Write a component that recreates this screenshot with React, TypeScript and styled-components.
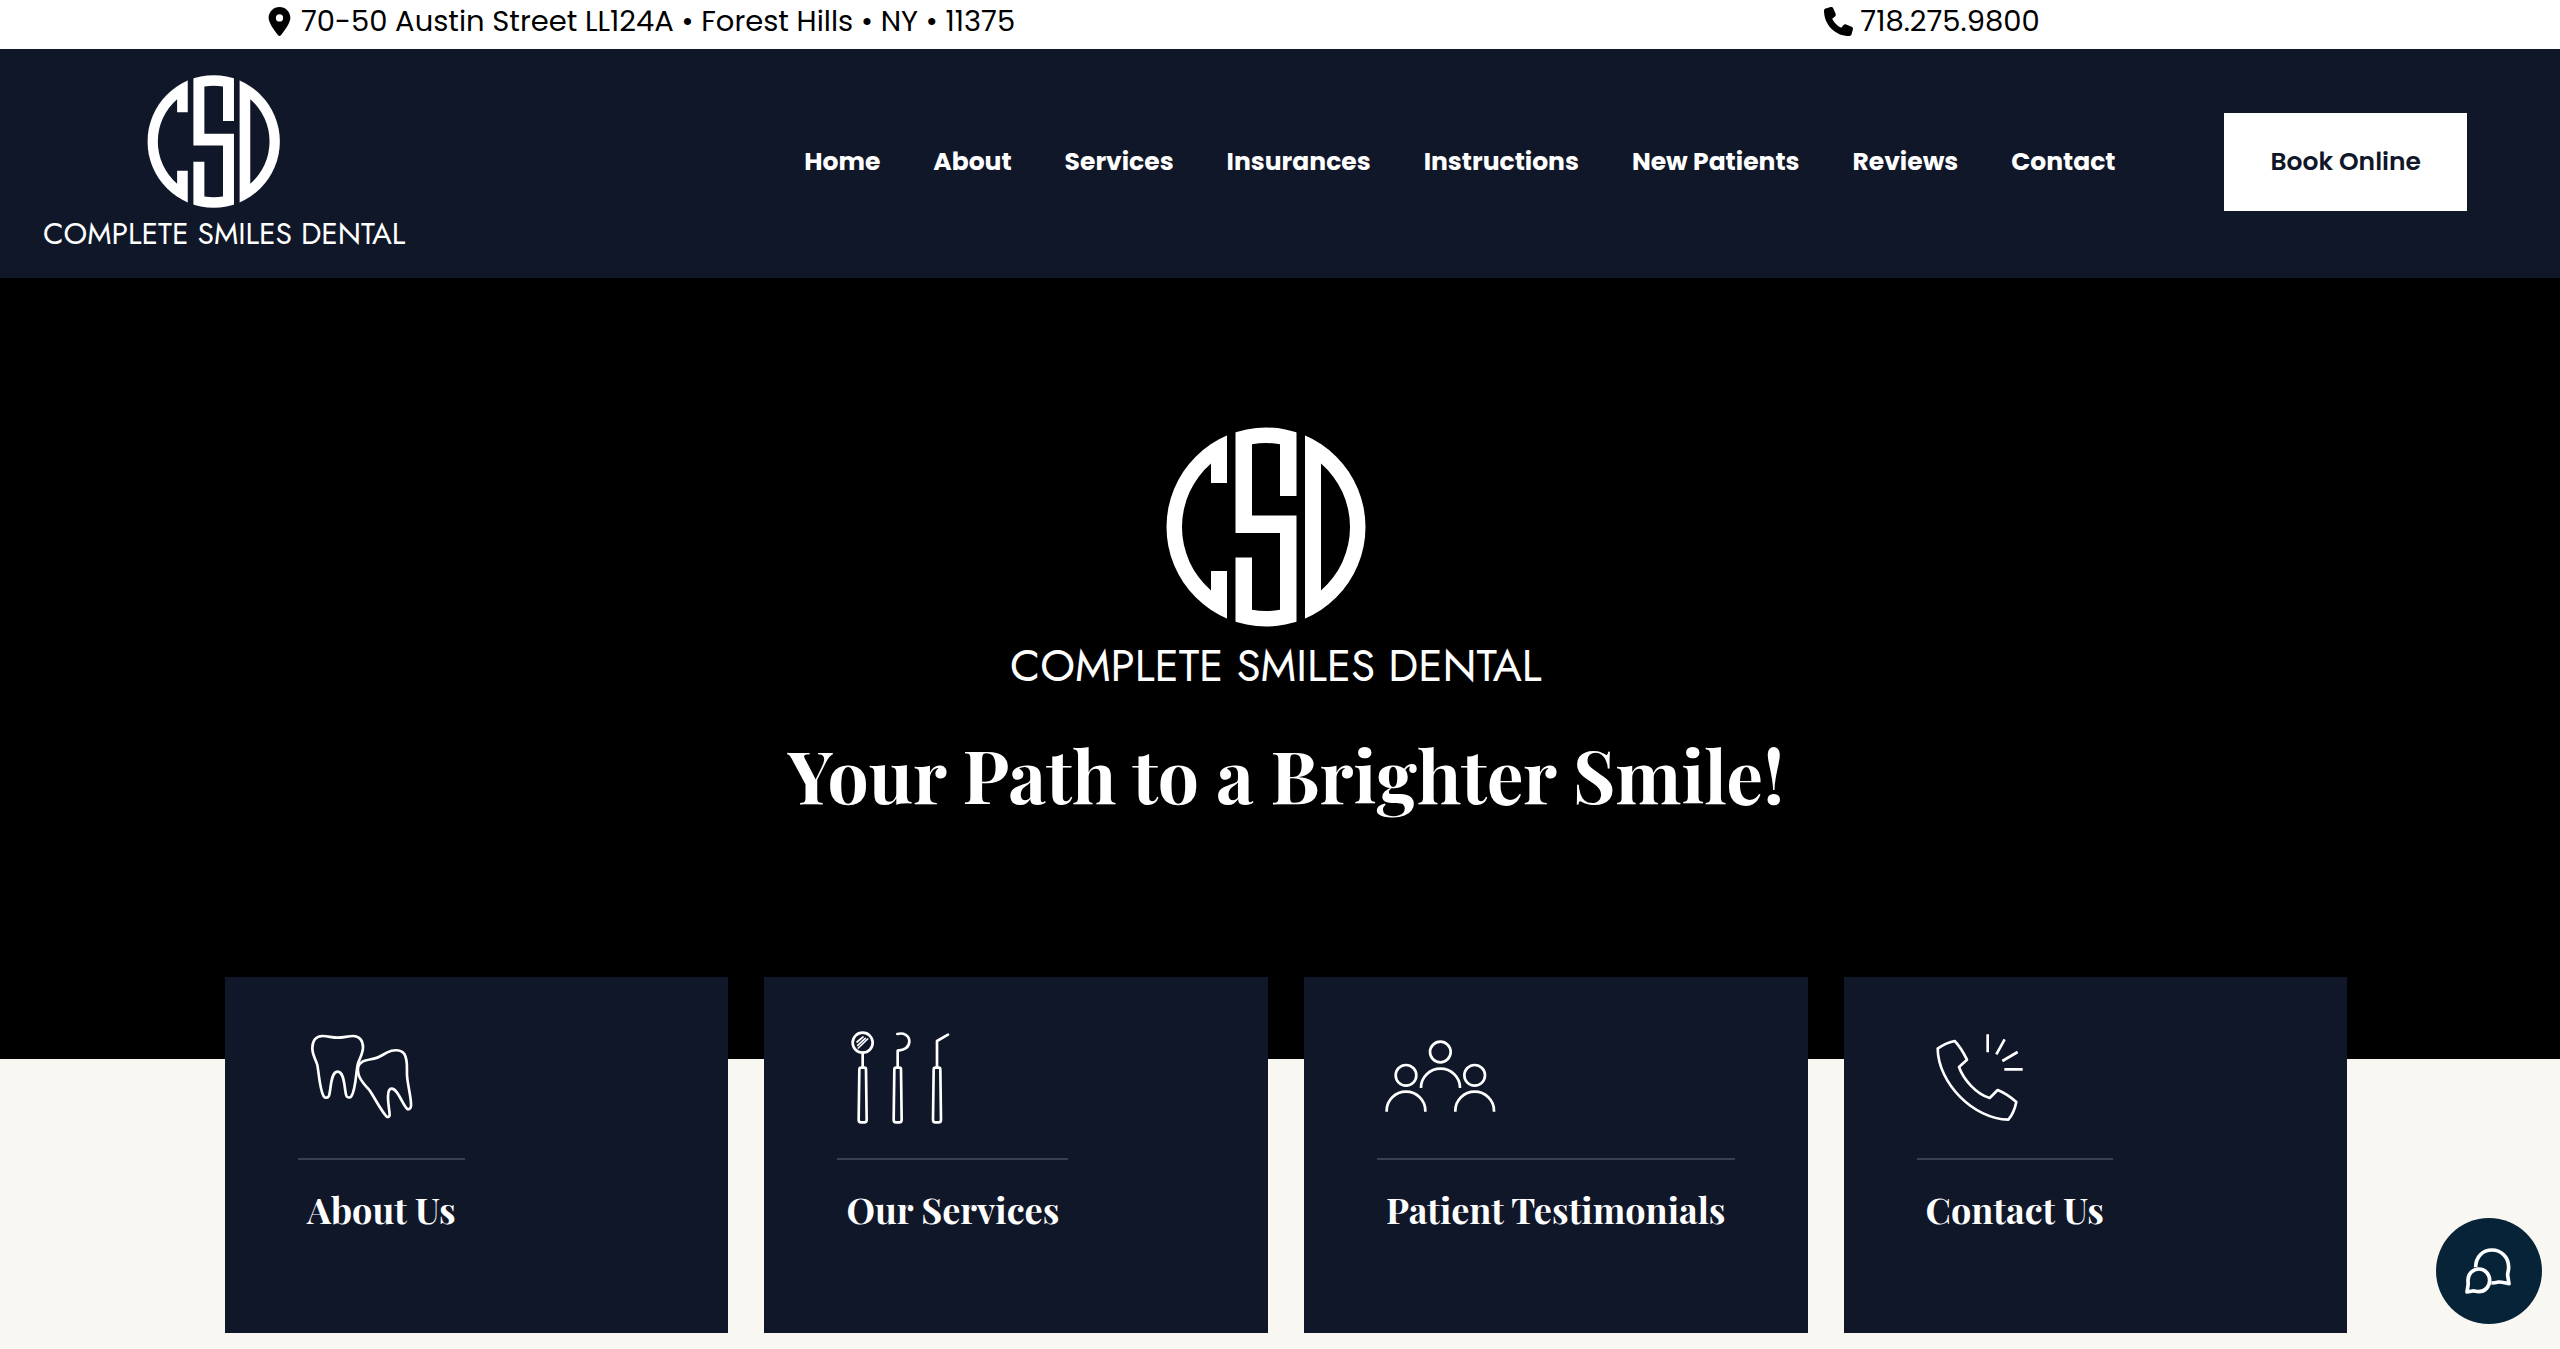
import React from 'react';
import styled, { createGlobalStyle } from 'styled-components';
import { FaLocationDot, FaPhone } from 'react-icons/fa6';

const navy = '#101728';
const cream = '#f9f7f1';
const sans = "Poppins, Inter, 'Open Sans', sans-serif";
const serif = "'Playfair Display', 'Liberation Serif', serif";

const GlobalStyle = createGlobalStyle`
  *, *::before, *::after { box-sizing: border-box; }
  body {
    margin: 0;
    background: ${cream};
    font-family: ${sans};
  }
  h1, h2, p { margin: 0; }
  a { color: inherit; text-decoration: none; }
`;

const TopBar = styled.div`
  display: grid;
  grid-template-columns: 1fr 1fr;
  height: 49px;
  padding-bottom: 7px;
  background: #fff;
  color: #000;
`;

const ContactCell = styled.div<{ $inset?: number }>`
  display: flex;
  align-items: center;
  justify-content: center;
  padding-left: ${(p) => p.$inset ?? 0}px;
`;

const ContactLink = styled.a`
  display: flex;
  align-items: center;
  gap: 7px;
  font-size: 29px;
  line-height: 41px;
  white-space: nowrap;

  svg {
    width: auto;
    height: 29px;
  }
`;

const Header = styled.header`
  display: flex;
  align-items: center;
  padding: 25px 93px 29px 43px;
  background: ${navy};
  color: #fff;
`;

const LogoLink = styled.a<{ $large?: boolean }>`
  display: flex;
  flex-direction: column;
  gap: ${(p) => (p.$large ? 17 : 11)}px;
  width: ${(p) => (p.$large ? 552 : 368)}px;
  padding-top: 1px;
  color: #fff;
`;

const LogoMark = styled.svg<{ $large?: boolean }>`
  display: block;
  width: ${(p) => (p.$large ? 534 : 356)}px;
  height: ${(p) => (p.$large ? 200 : 133)}px;
`;

const LogoName = styled.span<{ $large?: boolean }>`
  font-family: Jost, Lato, sans-serif;
  font-weight: 400;
  font-size: ${(p) => (p.$large ? 44 : 30)}px;
  line-height: 1;
  white-space: nowrap;
`;

const Nav = styled.nav`
  display: flex;
  gap: 53px;
  margin: 0 109px 0 auto;
`;

const NavLink = styled.a`
  font-size: 25px;
  font-weight: 700;
  line-height: 40px;
  white-space: nowrap;
`;

const BookButton = styled.button`
  height: 98px;
  padding: 0 46px;
  border: 0;
  background: #fff;
  color: ${navy};
  font-family: ${sans};
  font-size: 25px;
  font-weight: 600;
  white-space: nowrap;
  cursor: pointer;
`;

const Hero = styled.section`
  display: flex;
  flex-direction: column;
  align-items: center;
  gap: 43px;
  padding: 148px 213px 242px 225px;
  background: #000;
`;

const HeroTitle = styled.h1`
  color: #fff;
  font-family: ${serif};
  font-size: 73px;
  font-weight: 700;
  line-height: 86px;
  text-align: center;
`;

const Cards = styled.section`
  display: grid;
  grid-template-columns: repeat(4, 1fr);
  gap: 36px;
  margin-top: -82px;
  padding: 0 213px 16px 225px;
`;

const Card = styled.a`
  display: flex;
  flex-direction: column;
  align-items: flex-start;
  gap: 28px;
  position: relative;
  height: 356px;
  padding: 43px 73px 0;
  background: ${navy};
  color: #fff;
`;

const CardIcon = styled.svg`
  display: block;
  width: 132px;
  height: 110px;
  fill: none;
  stroke: #fff;
  stroke-width: 8;
  stroke-linejoin: round;
`;

const CardTitle = styled.h2`
  padding: 27px 9px 0;
  border-top: 2px solid #3a3e4f;
  font-family: ${serif};
  font-size: 36px;
  font-weight: 700;
  line-height: 44px;
  white-space: nowrap;
`;

const ChatButton = styled.button`
  position: fixed;
  right: 18px;
  bottom: 25px;
  width: 106px;
  height: 106px;
  padding: 0;
  border: 0;
  border-radius: 50%;
  background: #072338;
  cursor: pointer;
`;

const ChatIcon = styled.svg`
  display: block;
  width: 106px;
  height: 106px;
  fill: none;
  stroke: #fff;
  stroke-width: 11;
  stroke-linejoin: round;
`;

function Logo({ large }: { large?: boolean }) {
  const clip = large ? 'logo-disc-large' : 'logo-disc';
  return (
    <LogoLink href="#home" $large={large}>
      <LogoMark $large={large} viewBox="-256 -100 534 200" fill="#fff" aria-hidden="true">
        <clipPath id={clip}>
          <circle r="99.5" />
        </clipPath>
        <g clipPath={`url(#${clip})`}>
          <path d="M-39 -100H-100V100H-39V44H-55V63.5A84 84 0 0 1 -55 -63.5V-44H-39Z" />
          <path d="M-30.5 -100H30.5V-31H14V-82.8A84 84 0 0 0 -14 -82.8V-11.5H30.5V100H-30.5V30.5H-14V82.8A84 84 0 0 0 14 82.8V6H-30.5Z" />
          <path fillRule="evenodd" d="M39 -100H100V100H39ZM55 -63.5V63.5A84 84 0 0 0 55 -63.5Z" />
        </g>
      </LogoMark>
      <LogoName $large={large}>COMPLETE SMILES DENTAL</LogoName>
    </LogoLink>
  );
}

const teeth = (
  <g transform="translate(6 0)">
    <path d="M113 53C95 53 85 48 68 48C46 48 37 65 37 85C37 105 48 120 52 135C56 155 60 215 72 230C76 235 84 234 87 227C93 212 91 155 113 155C135 155 133 212 139 227C142 234 150 234 154 229C168 210 168 150 174 130C180 113 189 100 189 82C189 62 178 48 160 48C143 48 131 53 113 53Z" />
    <path d="M186 126C176 131 172 145 175 160C178 180 195 195 208 210C222 230 245 275 260 290C265 293 270 288 269 282C267 262 256 206 275 206C295 206 310 262 324 268C332 268 334 260 333 250C332 225 322 190 321 165C320 140 324 120 313 102C303 88 280 88 262 97C245 106 237 113 222 116C208 119 196 120 186 126Z" />
  </g>
);

const handle = 'm-5 0h10q5 0 5 6l2 150q0 8-7 8h-10q-7 0-7-8l2-150q0-6 5-6z';

const tools = (
  <g strokeLinecap="round">
    <circle cx="77" cy="68" r="30" />
    <path d="M60 66L78 51M62 76L85 55M64 84L92 57" strokeWidth="5" />
    <path d="M77 98V143" />
    <path d={`M77 143${handle}`} />
    <path d="M181 42C200 37 217 46 217 64C217 82 203 90 182 92V143" />
    <path d={`M182 143${handle}`} />
    <path d="M333 44L300 63V143" />
    <path d={`M300 143${handle}`} />
  </g>
);

const people = (
  <>
    <circle cx="190" cy="96" r="31" />
    <path d="M132 204V203A58.5 57 0 0 1 249 203V204" />
    <circle cx="87" cy="166" r="31" />
    <path d="M29 275V272A58 57 0 0 1 145 272V275" />
    <circle cx="293" cy="166" r="31" />
    <path d="M235 275V272A58 57 0 0 1 351 272V275" />
  </>
);

const phone = (
  <g transform="translate(9 0)">
    <path d="M53 86C68 75 86 67 104 63C120 79 131 99 141 119L117 141C130 178 168 222 209 234L233 210C253 218 273 232 289 246C285 265 277 285 265 299C160 297 55 190 53 86Z" />
    <path d="M203 43V97M254 58L229 103M293 96L247 123M253 148H308" />
  </g>
);

const links = ['Home', 'About', 'Services', 'Insurances', 'Instructions', 'New Patients', 'Reviews', 'Contact'];

const cards = [
  { title: 'About Us', icon: teeth },
  { title: 'Our Services', icon: tools },
  { title: 'Patient Testimonials', icon: people },
  { title: 'Contact Us', icon: phone },
];

export default function App() {
  return (
    <>
      <GlobalStyle />
      <TopBar>
        <ContactCell>
          <ContactLink href="#directions">
            <FaLocationDot />
            70-50 Austin Street LL124A • Forest Hills • NY • 11375
          </ContactLink>
        </ContactCell>
        <ContactCell $inset={24}>
          <ContactLink href="tel:7182759800">
            <FaPhone />
            718.275.9800
          </ContactLink>
        </ContactCell>
      </TopBar>
      <Header>
        <Logo />
        <Nav>
          {links.map((label) => (
            <NavLink key={label} href={`#${label.toLowerCase().replace(' ', '-')}`}>
              {label}
            </NavLink>
          ))}
        </Nav>
        <BookButton type="button">Book Online</BookButton>
      </Header>
      <main>
        <Hero>
          <Logo large />
          <HeroTitle>Your Path to a Brighter Smile!</HeroTitle>
        </Hero>
        <Cards>
          {cards.map(({ title, icon }) => (
            <Card key={title} href={`#${title.toLowerCase().replace(' ', '-')}`}>
              <CardIcon viewBox="0 0 396 330" aria-hidden="true">{icon}</CardIcon>
              <CardTitle>{title}</CardTitle>
            </Card>
          ))}
        </Cards>
      </main>
      <ChatButton type="button" aria-label="Open chat">
        <ChatIcon viewBox="20 24 318 318" aria-hidden="true">
          <path d="M139 172C139 140 160 120 188 120C217 120 238 143 238 172C238 184 234 190 235 196L239 221C228 220 218 215 208 216C200 218 194 219 186 219" />
          <path d="M149 177C168 177 181 193 181 211C181 230 167 245 148 245C140 245 136 242 130 243L113 246L116 226C117 220 116 216 116 210C116 192 130 177 149 177Z" />
        </ChatIcon>
      </ChatButton>
    </>
  );
}
